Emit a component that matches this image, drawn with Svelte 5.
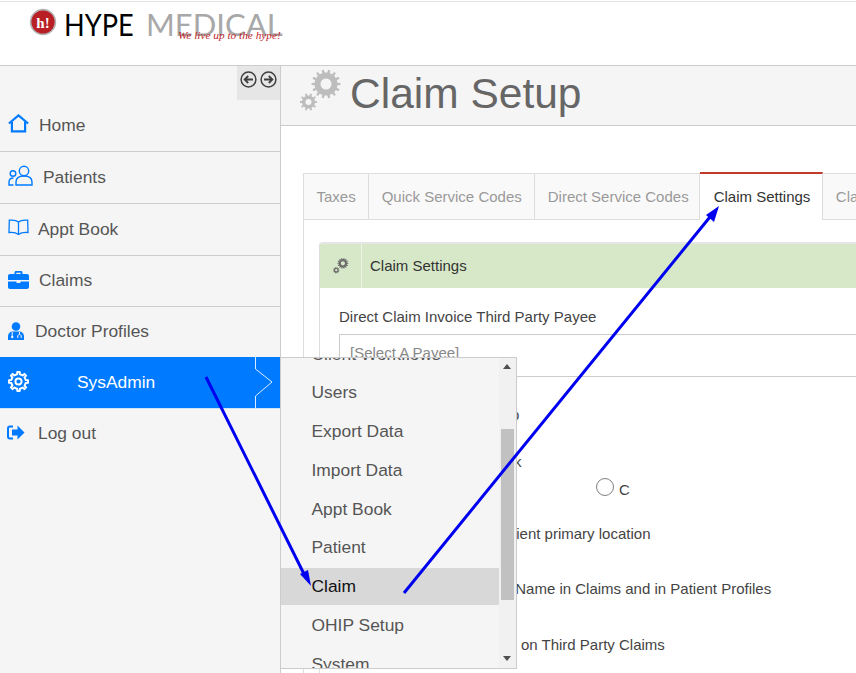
<script>
  function gear(cx, cy, ro, ri, teeth, hole) {
    let d = '';
    const step = (Math.PI * 2) / teeth;
    for (let i = 0; i < teeth; i++) {
      const a = i * step;
      const pts = [
        [ri, a - step * 0.5],
        [ri, a - step * 0.25],
        [ro, a - step * 0.16],
        [ro, a + step * 0.16],
        [ri, a + step * 0.25]
      ];
      for (const [r, t] of pts) {
        d += (d ? 'L' : 'M') + (cx + r * Math.cos(t)).toFixed(2) + ' ' + (cy + r * Math.sin(t)).toFixed(2);
      }
    }
    d += 'Z';
    d += `M${cx - hole} ${cy}a${hole} ${hole} 0 1 0 ${hole * 2} 0a${hole} ${hole} 0 1 0 ${-hole * 2} 0Z`;
    return d;
  }
  const bigGear = gear(26, 14, 14.5, 11.5, 14, 5.5);
  const smallGear = gear(8.5, 32, 8.7, 6.5, 10, 3);
  const navTop = ['Home', 'Patients', 'Appt Book', 'Claims', 'Doctor Profiles'];
  const menu = ['Client Workflows', 'Users', 'Export Data', 'Import Data', 'Appt Book', 'Patient', 'Claim', 'OHIP Setup', 'System'];
  const tabs = ['Taxes', 'Quick Service Codes', 'Direct Service Codes', 'Claim Settings', 'Claim Types'];
</script>

<div class="page">
  <header class="top">
    <div class="logo">
      <svg class="badge" width="28" height="28" viewBox="0 0 28 28">
        <circle cx="14" cy="14" r="13.2" fill="#b3b3b3" />
        <circle cx="14" cy="14" r="11.6" fill="#b92025" />
        <rect x="7.5" y="7" width="13" height="15" fill="#b92025" />
        <text x="14" y="20" text-anchor="middle" class="badge-text">h!</text>
      </svg>
      <span class="hype">HYPE</span>
      <span class="medical">MEDICAL</span>
      <span class="tag">We live up to the hype!</span>
    </div>
  </header>

  <div class="body">
    <aside class="side">
      <div class="toggles">
        <svg width="17" height="17" viewBox="0 0 17 17" fill="none" stroke="#3f3f3f" stroke-width="1.5"><circle cx="8.5" cy="8.5" r="7.4"/><path d="M13 8.5H5M8.2 5 4.6 8.5l3.6 3.5" stroke-width="1.8"/></svg>
        <svg width="17" height="17" viewBox="0 0 17 17" fill="none" stroke="#3f3f3f" stroke-width="1.5"><circle cx="8.5" cy="8.5" r="7.4"/><path d="M4 8.5h8M8.8 5l3.6 3.5L8.8 12" stroke-width="1.8"/></svg>
      </div>

      <nav class="nav">
        <a class="item home">
          <svg width="21" height="19" viewBox="0 0 21 19" fill="none" stroke="#007bff" stroke-width="2.2"><path d="M.9 9.5 10.5 1.4l9.6 8.1"/><path d="M3.9 8v9.4h13.2V8"/></svg>
          <span>{navTop[0]}</span>
        </a>
        <a class="item patients">
          <svg width="25" height="21" viewBox="0 0 25 21" fill="none" stroke="#007bff" stroke-width="1.4"><circle cx="16" cy="6" r="4.7"/><path d="M8 20v-3c0-3.600 3-6 8-6s8 2.400 8 6v3z"/><circle cx="5" cy="8.500" r="2.800"/><path d="M5.500 20H1v-3c0-2.500 1.500-4 4.500-4"/></svg>
          <span>{navTop[1]}</span>
        </a>
        <a class="item appt">
          <svg width="21" height="17" viewBox="0 0 21 17" fill="none" stroke="#007bff" stroke-width="1.300"><path d="M10.500 3C8.500 1.300 5 .8 1.300 1.200L1 13.500c3.500-.4 7 0 9.500 2 2.500-2 6-2.400 9.500-2l-.3-12.300C16 .8 12.500 1.300 10.500 3zM10.500 3v12.500"/></svg>
          <span>{navTop[2]}</span>
        </a>
        <a class="item claims">
          <svg width="21" height="18" viewBox="0 0 21 18" fill="#007bff"><path d="M6.500 3V1.500C6.500.7 7.200 0 8 0h5c.8 0 1.500.7 1.500 1.500V3h4.500c1.100 0 2 .9 2 2v4H0V5c0-1.100.9-2 2-2zM8.300 1.800V3h4.400V1.800zM0 10.500h8.500V12h4v-1.500H21V16c0 1.100-.9 2-2 2H2c-1.100 0-2-.9-2-2z"/></svg>
          <span>{navTop[3]}</span>
        </a>
        <a class="item doctor">
          <svg width="16" height="18" viewBox="0 0 16 18" fill="#007bff"><circle cx="8" cy="4.500" r="4.300"/><path d="M0 18v-3.500C0 11.500 2 9.500 5 9.500h6c3 0 5 2 5 5V18z"/><path d="M4.200 10v4M11.500 10v2M9.800 16v-2c0-2 3.400-2 3.400 0v2" fill="none" stroke="#f5f5f5" stroke-width="1"/><circle cx="4.200" cy="15" r="1.200" fill="#f5f5f5"/></svg>
          <span>{navTop[4]}</span>
        </a>
        <a class="item active">
          <svg class="cog" width="21" height="21" viewBox="0 0 21 21"><path fill="none" stroke="#fff" stroke-width="2" stroke-linejoin="round" d={gear(10.500, 10.500, 9.600, 7.300, 8, 3.100)} /></svg>
          <span>SysAdmin</span>
          <svg class="chev" width="20" height="51" viewBox="0 0 20 51" fill="none" stroke="#fff" stroke-opacity=".85"><path d="M1.500 0v12L18 25 1.500 39v12"/></svg>
        </a>
        <a class="item logout">
          <svg width="18" height="15" viewBox="0 0 18 15"><path d="M6 1.500H3C1.900 1.500 1 2.400 1 3.500v8c0 1.100.9 2 2 2h3" fill="none" stroke="#007bff" stroke-width="2"/><path fill="#007bff" d="M10.500.5 17.500 7.500l-7 7V10.500H5v-6h5.500z"/></svg>
          <span>Log out</span>
        </a>
      </nav>
    </aside>

    <main class="main">
      <div class="title">
        <svg width="42" height="42" viewBox="0 0 42 42">
          <path fill="#bdbdbd" fill-rule="evenodd" d={bigGear} />
          <path fill="#bdbdbd" fill-rule="evenodd" d={smallGear} />
        </svg>
        <h1>Claim Setup</h1>
      </div>

      <div class="content">
        <div class="tabs">
          {#each tabs as t, i}
            <div class="tab" class:on={i === 3} class:direct={i === 2}>{t}</div>
          {/each}
        </div>
        <div class="tabbody">
          <section class="panel">
            <div class="panel-head">
              <div class="panel-icon">
                <svg width="16" height="16" viewBox="0 0 42 42">
                  <path fill="#6e6e6e" fill-rule="evenodd" d={bigGear} />
                  <path fill="#6e6e6e" fill-rule="evenodd" d={smallGear} />
                </svg>
              </div>
              <div class="panel-title">Claim Settings</div>
            </div>
            <div class="panel-body">
              <label class="lbl">Direct Claim Invoice Third Party Payee</label>
              <div class="select">[Select A Payee]</div>
              <div class="rows">
                <div class="row r1">Enable Claim Group Setup</div>
                <div class="row r2">Require Third Party Check</div>
                <div class="radios">
                  <span class="radio"></span><span class="rl">A</span>
                  <span class="radio"></span><span class="rl">B</span>
                  <span class="radio"></span><span class="rl">C</span>
                </div>
                <div class="row r4">Set claim location to patient primary location</div>
                <div class="row r5">Show Patient Preferred Name in Claims and in Patient Profiles</div>
                <div class="row r6">Show Patient Address on Third Party Claims</div>
              </div>
            </div>
          </section>
        </div>
      </div>
    </main>

    <div class="flyout">
      <ul>
        {#each menu as m}
          <li class:hover={m === 'Claim'}>{m}</li>
        {/each}
      </ul>
      <div class="bar">
        <span class="up"></span>
        <span class="thumb"></span>
        <span class="down"></span>
      </div>
    </div>
  </div>

  <svg class="arrows" width="856" height="673" viewBox="0 0 856 673">
    <path d="M206 377 306 578M404 593 714 212" stroke="#0000f0" stroke-width="3" fill="none"/>
    <path d="M311 586 300 574 308 570z" fill="#0000f0"/>
    <path d="M719 206 706 215 714 222z" fill="#0000f0"/>
  </svg>
</div>

<style>
  :global(body) { margin: 0; background: #fff; overflow: hidden; }
  .page {
    position: relative;
    width: 856px;
    height: 673px;
    overflow: hidden;
    font-family: "Liberation Sans", Arial, sans-serif;
    color: #555;
  }
  .top {
    height: 63px;
    margin-top: 1px;
    border-top: 1px solid #e4e4e4;
    border-bottom: 1px solid #ccc;
    box-sizing: content-box;
  }
  .logo { position: relative; height: 63px; }
  .badge { position: absolute; left: 29px; top: 6px; }
  .badge-text { font: bold 15px "Liberation Serif", serif; fill: #fff; }
  .hype, .medical { position: absolute; top: 4px; font: 31px/36px Lato, "Liberation Sans", sans-serif; }
  .hype { left: 64px; color: #000; transform: scaleX(.875); transform-origin: left center; }
  .medical { left: 146px; color: #a8a8a8; }
  .tag {
    position: absolute; left: 178px; top: 26px;
    font: italic 11.300px/14px "Liberation Serif", serif;
    color: #c0272d;
    white-space: nowrap;
  }
  .body { position: relative; display: flex; height: 607px; }
  .side {
    width: 280px; flex: none;
    background: #f5f5f5;
    border-right: 1px solid #ccc;
  }
  .toggles {
    margin-left: 237px; height: 34px; box-sizing: border-box;
    background: #e6e6e6;
    display: flex; gap: 3px; padding: 5px 0 0 3px;
  }
  .nav { display: flex; flex-direction: column; }
  .item {
    display: flex; align-items: center;
    height: 51px; box-sizing: border-box;
    border-bottom: 1px solid #ccc;
    padding-left: 7px;
    font-size: 17.400px;
    color: #555;
    position: relative;
  }
  .home { height: 52px; }
  .home span { margin-left: 10px; margin-top: -1px; }
  .home svg { margin-top: -4px; margin-left: 1px;}
  .patients { height: 52px; }
  .patients span { margin-left: 10px; }
  .patients svg { margin-top: -4px; margin-left: 1px; }
  .appt { height: 52px; }
  .appt span { margin-left: 9px; }
  .appt svg { margin-top: -4px; margin-left: 1px; }
  .claims { height: 51px; }
  .claims span { margin-left: 10px; margin-top: -2px; }
  .claims svg { margin-top: -3px; margin-left: 1px; }
  .doctor { border-bottom: 0; height: 50px; }
  .doctor span { margin-left: 11px; margin-top: -2px; }
  .doctor svg { margin-top: -2px; margin-left: 1px; }
  .active {
    background: #007bff; color: #fff; border-bottom: 1px solid #cfe3f7;
    height: 52px;
  }
  .active span { margin-left: 48px; }
  .cog { margin-left: 1px; margin-top: -3px; }
  .chev { position: absolute; left: 254px; top: 0; }
  .logout { border-bottom: 0; height: 48px; }
  .logout span { margin-left: 13px; }
  .logout svg { margin-top: -2px; }

  .main { flex: 1; min-width: 0; }
  .title {
    height: 60px; box-sizing: border-box;
    background: #f5f5f5;
    border-bottom: 1px solid #ccc;
    display: flex; align-items: center;
    padding-left: 19px;
  }
  .title svg { flex: none; margin-top: -9px; }
  h1 {
    margin: -4px 0 0 8px;
    font: 400 42.500px/52px "Liberation Sans", Arial, sans-serif;
    color: #666;
    white-space: nowrap;
  }
  .content { padding: 47px 0 0 22px; }
  .tabs {
    display: flex; height: 47px; box-sizing: border-box;
    border-left: 1px solid #ddd;
    white-space: nowrap;
  }
  .tab {
    box-sizing: border-box; height: 47px;
    flex: none;
    padding: 0 12.500px;
    line-height: 46px;
    font-size: 15px;
    color: #999;
    background: #f9f9f9;
    border-top: 1px solid #ddd;
    border-right: 1px solid #ddd;
    border-bottom: 1px solid #ddd;
  }
  .tab.direct { padding: 0 10px 0 12.500px; }
  .tab.on {
    background: #fff; color: #333;
    border-top: 2px solid #c0392b;
    border-bottom: 0;
    line-height: 45px;
    margin-top: -1px; height: 48px;
    padding: 0 12px 0 14px;
  }
  .tabbody {
    border-left: 1px solid #ddd;
    padding: 22px 0 0 15px;
    min-height: 460px;
  }
  .panel {
    border: 1px solid #ddd; border-right: 0;
    border-top: 2px solid #e6e6e6;
    border-radius: 4px 0 0 0;
    min-height: 440px;
  }
  .panel-head { display: flex; height: 44px; background: #d6e8c8; }
  .panel-icon {
    width: 42px; flex: none; box-sizing: border-box;
    border-right: 1px solid #eef5e8;
    display: flex; align-items: center; justify-content: center;
    padding-bottom: 1px;
  }
  .panel-title { padding-left: 8px; line-height: 44px; font-size: 15px; color: #333; }
  .panel-body { padding: 20px 0 0 19px; }
  .lbl { display: block; font-size: 15px; line-height: 18px; color: #444; }
  .select {
    margin-top: 8px;
    height: 43px; box-sizing: border-box;
    border: 1px solid #ccc; border-right: 0;
    padding: 9px 0 0 10px;
    font-size: 15px; line-height: 18px;
    color: #888;
  }
  .rows { font-size: 15px; color: #444; line-height: 18px; }
  .row { white-space: nowrap; }
  .r1 { margin-top: 29px; padding-left: 2px; }
  .r2 { margin-top: 29px; padding-left: 6px; }
  .radios { display: flex; align-items: center; height: 24px; margin-top: 5px; }
  .radio { width: 16px; height: 16px; border: 1.500px solid #808080; border-radius: 50%; box-sizing: content-box; margin-top: -3px; flex: none; }
  .rl { margin-left: 5px; margin-right: 83px; padding-top: 3px; }
  .radio:first-child { margin-left: 25px; }
  .r4 { margin-top: 25px; padding-left: 18px; }
  .r5 { margin-top: 37px; padding-left: 17px; }
  .r6 { margin-top: 38px; padding-left: 31px; }

  .flyout {
    position: absolute; left: 280px; top: 291px;
    width: 237px; height: 312px; box-sizing: border-box;
    border: 1px solid #ccc;
    background: #f5f5f5;
    overflow: hidden;
  }
  ul { list-style: none; margin: -22.500px 17px 0 0; padding: 0; }
  li {
    height: 38.750px; line-height: 37px; padding-left: 30.500px;
    font-size: 17.400px; color: #555;
    white-space: nowrap;
  }
  li.hover { background: #d8d8d8; color: #111; height: 37px; margin-bottom: 1.750px; }
  .bar {
    position: absolute; right: 0; top: 0; bottom: 0; width: 17px;
    background: #f1f1f1;
  }
  .thumb { position: absolute; left: 2px; top: 71px; width: 13px; height: 171px; background: #c1c1c1; }
  .up, .down { position: absolute; left: 4px; width: 0; height: 0; border-left: 4px solid transparent; border-right: 4px solid transparent; }
  .up { top: 6px; border-bottom: 5px solid #505050; }
  .down { bottom: 7px; border-top: 5px solid #505050; }

  .arrows { position: absolute; left: 0; top: 0; pointer-events: none; }
</style>
